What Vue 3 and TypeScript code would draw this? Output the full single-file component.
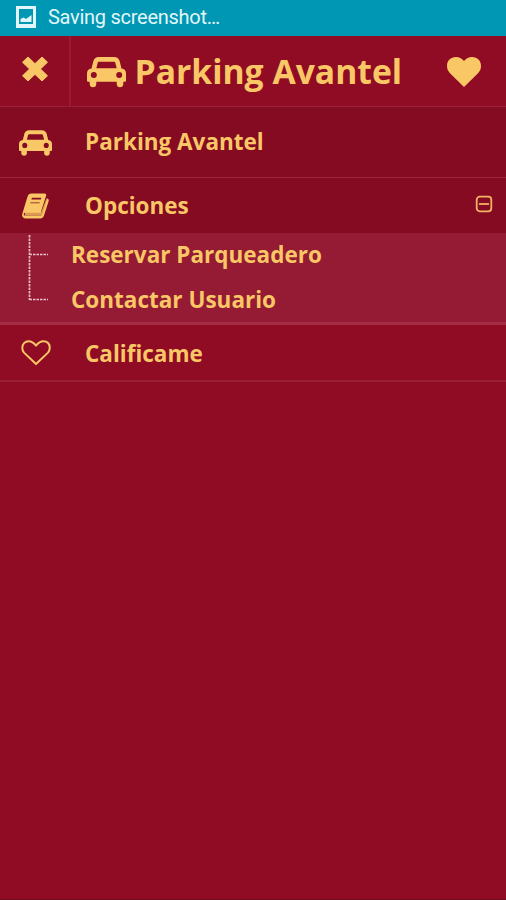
<script setup lang="ts">
interface Option {
  id: number
  label: string
}

const title = 'Parking Avantel'
const options: Option[] = [
  { id: 1, label: 'Reservar Parqueadero' },
  { id: 2, label: 'Contactar Usuario' },
]
const carPath =
  'M12 0H27C30 0 31.8 1.5 32.6 4L34.5 11.5C37.5 11.8 39 13.5 39 16.5V23.5C39 24.3 38.7 24.7 38 24.7H36.3V27C36.3 29 35 30.3 33 30.3S29.7 29 29.7 27V24.7H9.3V27C9.3 29 8 30.3 6 30.3S2.7 29 2.7 27V24.7H1C.3 24.7 0 24.3 0 23.5V16.5C0 13.5 1.5 11.8 4.5 11.5L6.4 4C7.2 1.5 9 0 12 0ZM12.4 4.8C11.3 4.8 10.9 5.2 10.6 6.2L9.3 11.3H29.7L28.4 6.2C28.1 5.2 27.7 4.8 26.6 4.8ZM6.8 15A3 3 0 1 0 6.8 21A3 3 0 1 0 6.8 15ZM32.2 15A3 3 0 1 0 32.2 21A3 3 0 1 0 32.2 15Z'
</script>

<template>
  <main class="screen">
    <div class="status">
      <svg class="picture" viewBox="0 0 20 22">
        <path fill-rule="evenodd" d="M0 0H20V22H0ZM3 3V18H17V3Z" />
        <path d="M4.5 16V13L7.5 11.5L10 13L15.5 9V16Z" />
      </svg>
      <span>Saving screenshot…</span>
    </div>

    <header class="header">
      <button class="close" aria-label="Cerrar">
        <svg viewBox="0 0 26 26"><path d="M6 1L13 7.7L20 1L25.5 6.2L18.5 13L25.5 19.8L20 25L13 18.3L6 25L.5 19.8L7.5 13L.5 6.2Z" stroke-width="1" stroke-linejoin="round" /></svg>
      </button>
      <svg class="car" viewBox="0 0 39 31"><path fill-rule="evenodd" :d="carPath" /></svg>
      <h1>{{ title }}</h1>
      <svg class="heart" viewBox="0 0 34 30">
        <path d="M17 30L3 16.2C1 14.2 0 11.8 0 9C0 3.5 3.6 0 9 0C12.2 0 14.7 1.5 17 4C19.3 1.5 21.8 0 25 0C30.4 0 34 3.5 34 9C34 11.8 33 14.2 31 16.2Z" />
      </svg>
    </header>

    <nav>
      <a class="row home">
        <span class="icon"><svg class="small-car" viewBox="0 0 39 30.3"><path fill-rule="evenodd" :d="carPath" /></svg></span>
        <span class="label">{{ title }}</span>
      </a>
      <a class="row group">
        <span class="icon">
          <svg class="book" viewBox="0 0 28 26">
            <path class="pages" d="M3 19H20L25.5 5L27 6L22 23H3Z" />
            <path fill-rule="evenodd" d="M10 0H23.5C25 0 25.4 1 25 2.3L19.3 20H3.6C2.2 20 1.5 20.7 1.8 21.7C2 22.5 2.8 23 4 23H19C20.2 23 20.8 22.4 21.2 21.2L26.3 5.3C27.7 5.8 28 6.7 27.6 8L22.7 23.2C22 25.2 20.8 26 19 26H4C1.6 26 0 24.4 0 22.2L5.7 3.5C6.5 1 7.6 0 10 0ZM10.3 4.5L9.7 6.3H19.4L20 4.5Z" />
            <path class="line" d="M8.7 9.6H18.3" />
          </svg>
        </span>
        <span class="label">Opciones</span>
        <svg class="minus" viewBox="0 0 18 18"><rect x="1.7" y="1.7" width="14.6" height="14.6" rx="3" /><path d="M4 9H14" /></svg>
      </a>
      <div class="sub">
        <svg class="branches" viewBox="0 0 20 68">
          <path d="M1.5 1V66M1.5 20.5H20M1.5 65.5H20" />
        </svg>
        <ul>
          <li v-for="option in options" :key="option.id">{{ option.label }}</li>
        </ul>
      </div>
      <a class="row rate">
        <span class="icon">
          <svg class="outline" viewBox="0 0 30 26">
            <path d="M15 24L3 12.6C1.8 11.3 1.3 9.8 1.3 8C1.3 3.9 3.8 1.3 7.8 1.3C11 1.3 12.8 3 15 5.6C17.2 3 19 1.3 22.2 1.3C26.2 1.3 28.7 3.9 28.7 8C28.7 9.8 28.2 11.3 27 12.6Z" />
          </svg>
        </span>
        <span class="label">Calificame</span>
      </a>
    </nav>
  </main>
</template>

<style>
body {
  margin: 0;
  background: #8f0c24;
}
</style>

<style scoped>
* {
  box-sizing: border-box;
}
.screen {
  width: 506px;
  height: 900px;
  overflow: hidden;
  background: #8f0c24;
  border-bottom: 1px solid #6f0b1c;
  color: #fac766;
  font-family: 'Open Sans', sans-serif;
  font-weight: 700;
}
svg {
  display: block;
  flex: none;
  fill: #fac766;
}
.status {
  height: 36px;
  display: flex;
  align-items: center;
  gap: 12px;
  padding: 0 16px 2px;
  background: #0097b4;
  color: #e2f6fa;
  font: 400 20px/24px Roboto, sans-serif;
  letter-spacing: -0.27px;
}
.picture {
  width: 20px;
  height: 22px;
  fill: #e2f6fa;
}
.header {
  height: 71px;
  display: flex;
  align-items: center;
  border-bottom: 1px solid #9d2039;
}
.close {
  width: 71px;
  height: 70px;
  margin: 0;
  padding: 0 0 4px 22px;
  border: 0;
  border-right: 2px solid #971a33;
  background: none;
}
.close svg {
  width: 26px;
  height: 26px;
  stroke: #fac766;
}
.car {
  width: 39px;
  height: 31px;
  margin: 3px 0 0 16px;
}
h1 {
  margin: 0 0 0 8.5px;
  font-size: 33.7px;
  line-height: 46px;
  white-space: nowrap;
}
.heart {
  width: 34px;
  height: 30px;
  margin: 1px 25px 0 auto;
}
.row {
  display: flex;
  align-items: center;
}
.home {
  height: 71px;
  background: #850b23;
  border-bottom: 1px solid #9a253e;
}
.icon {
  width: 71px;
  display: flex;
  justify-content: center;
}
.label {
  margin-left: 14px;
  font-size: 22.5px;
  line-height: 30px;
}
.small-car {
  width: 33px;
  height: 26px;
  margin-top: 2px;
}
.group {
  height: 55px;
  background: #850b23;
}
.group .label,
.rate .label {
  padding-top: 1px;
}
.book {
  width: 27px;
  height: 26px;
}
.pages {
  fill: #d99b54;
}
.line {
  stroke: #b96a3f;
  stroke-width: 1.6;
}
.minus {
  width: 18px;
  height: 18px;
  margin: 0 13.5px 3px auto;
  fill: none;
  stroke: #f2b263;
  stroke-width: 1.8;
}
.sub {
  height: 92px;
  display: flex;
  background: #951b34;
  border-bottom: 3px solid #a52d45;
}
.branches {
  width: 20px;
  height: 68px;
  margin: 1px 23px 0 28px;
  fill: none;
  stroke: #e8c0c8;
  stroke-width: 1.7;
  stroke-dasharray: 2.5 1;
}
ul {
  margin: 0;
  padding: 0;
  list-style: none;
}
li {
  height: 45px;
  font-size: 22.5px;
  line-height: 43px;
}
.rate {
  height: 57px;
  padding-top: 1px;
  border-bottom: 2px solid #9a2039;
}
.outline {
  width: 30px;
  height: 26px;
  fill: none;
  stroke: #fac766;
  stroke-width: 2;
  stroke-linejoin: round;
}
</style>
